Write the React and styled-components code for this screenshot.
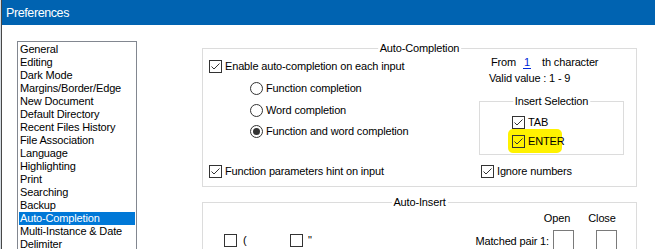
import React from "react";
import styled, { createGlobalStyle } from "styled-components";

const Global = createGlobalStyle`
  html, body { margin: 0; padding: 0; overflow: hidden; background: #ffffff; }
  * { box-sizing: border-box; }
`;

const Window = styled.div`
  width: 655px;
  height: 249px;
  overflow: hidden;
  background: #ffffff;
  border-left: 1px solid #d4dbe2;
  font-family: "Liberation Sans", Arial, sans-serif;
  font-size: 11px;
  letter-spacing: -0.15px;
  color: #000;
`;

const Frame = styled.div`
  height: 100%;
  border-left: 1px solid #474747;
  display: flex;
  flex-direction: column;
`;

const TitleBar = styled.div`
  height: 25px;
  flex: none;
  background: #0063b1;
  color: #fff;
  display: flex;
  align-items: center;
  padding-left: 4px;
  font-size: 12.5px;
  letter-spacing: -0.4px;
`;

const Body = styled.div`
  display: flex;
  align-items: flex-start;
  padding-left: 15px;
`;

const ListBox = styled.div`
  margin-top: 16px;
  width: 120px;
  height: 230px;
  border: 1px solid #828790;
  padding: 1px;
  flex: none;
`;

const ListItem = styled.div`
  height: 13px;
  line-height: 13px;
  padding-left: 1px;
  white-space: nowrap;
  background: ${(p) => (p.$selected ? "#0078d7" : "transparent")};
  color: ${(p) => (p.$selected ? "#fff" : "#000")};
`;

const Content = styled.div`
  margin-left: 65px;
  padding-top: 23px;
  display: flex;
  flex-direction: column;
`;

const Group = styled.div`
  position: relative;
  border: 1px solid #dcdcdc;
  width: ${(p) => p.$w}px;
  height: ${(p) => p.$h}px;
  margin-top: ${(p) => p.$mt || 0}px;
  flex: none;
`;

const Legend = styled.span`
  position: absolute;
  top: -7px;
  left: 50%;
  transform: translateX(-50%);
  background: #fff;
  padding: 0 2px;
  line-height: 13px;
  white-space: nowrap;
`;

const TopSection = styled.div`
  display: flex;
`;

const LeftCol = styled.div`
  width: 276px;
  flex: none;
  padding-top: 11px;
  padding-left: 6px;
  display: flex;
  flex-direction: column;
`;

const RadioList = styled.div`
  padding-left: 41px;
  display: flex;
  flex-direction: column;
`;

const RightCol = styled.div`
  padding-top: 7px;
  display: flex;
  flex-direction: column;
`;

const Row = styled.div`
  position: relative;
  z-index: 0;
  display: flex;
  align-items: center;
  height: 13px;
  line-height: 13px;
  white-space: nowrap;
  margin-top: ${(p) => p.$mt || 0}px;
  padding-left: ${(p) => p.$pl || 0}px;
  width: ${(p) => (p.$w ? `${p.$w}px` : "auto")};
  flex: none;
`;

const BoxMark = styled.span`
  width: 13px;
  height: 13px;
  border: 1px solid #333;
  flex: none;
  display: inline-flex;
  margin-right: 3px;
`;

const RadioMark = styled.span`
  width: 13px;
  height: 13px;
  border: 1px solid #333;
  border-radius: 50%;
  flex: none;
  display: inline-flex;
  align-items: center;
  justify-content: center;
  margin-right: 3px;
  background: #fff;
  &::after {
    content: "";
    width: 7px;
    height: 7px;
    border-radius: 50%;
    background: ${(p) => (p.$on ? "#333" : "transparent")};
  }
`;

const Highlight = styled.span`
  position: absolute;
  z-index: -1;
  left: ${(p) => p.$l}px;
  top: -6px;
  width: 54px;
  height: 24px;
  border-radius: 5px;
  background: #fff200;
`;

const ValueField = styled.span`
  margin-left: 7px;
  width: 8px;
  text-align: center;
  color: #0026d8;
  border-bottom: 1px solid #0026d8;
  line-height: 12px;
`;

const Spaced = styled.span`
  margin-left: ${(p) => p.$ml}px;
`;

const BottomRow = styled.div`
  display: flex;
  margin-top: 10px;
  padding-left: 6px;
`;

const InsertInner = styled.div`
  padding-top: 14px;
  padding-left: 32px;
  display: flex;
  flex-direction: column;
`;

const HeaderRow = styled.div`
  display: flex;
  padding-top: 9px;
  padding-left: 334px;
  gap: 5px;
`;

const HeaderCell = styled.span`
  width: 40px;
  text-align: center;
  line-height: 13px;
`;

const PairRow = styled.div`
  display: flex;
  align-items: center;
  height: 21px;
  margin-top: 5px;
  padding-left: 21px;
`;

const PairLabel = styled.span`
  margin-left: auto;
  white-space: nowrap;
`;

const EditBox = styled.span`
  width: 21px;
  height: 21px;
  border: 1px solid #7a7a7a;
  margin-left: ${(p) => p.$ml}px;
  flex: none;
`;

function Check({ checked }) {
  return (
    <BoxMark>
      {checked && (
        <svg width="11" height="11" viewBox="0 0 11 11">
          <path d="M1.5 5.5 L4 8 L9.5 2.5" fill="none" stroke="#333" strokeWidth="1" />
        </svg>
      )}
    </BoxMark>
  );
}

const items = [
  "General",
  "Editing",
  "Dark Mode",
  "Margins/Border/Edge",
  "New Document",
  "Default Directory",
  "Recent Files History",
  "File Association",
  "Language",
  "Highlighting",
  "Print",
  "Searching",
  "Backup",
  "Auto-Completion",
  "Multi-Instance & Date",
  "Delimiter",
];

export default function App() {
  return (
    <>
      <Global />
      <Window>
        <Frame>
          <TitleBar>Preferences</TitleBar>
          <Body>
            <ListBox>
              {items.map((t) => (
                <ListItem key={t} $selected={t === "Auto-Completion"}>
                  {t}
                </ListItem>
              ))}
            </ListBox>
            <Content>
              <Group $w={435} $h={139}>
                <Legend>Auto-Completion</Legend>
                <TopSection>
                  <LeftCol>
                    <Row>
                      <Check checked />
                      Enable auto-completion on each input
                    </Row>
                    <RadioList>
                      <Row $mt={9}>
                        <RadioMark />
                        Function completion
                      </Row>
                      <Row $mt={9}>
                        <RadioMark />
                        Word completion
                      </Row>
                      <Row $mt={8}>
                        <RadioMark $on />
                        Function and word completion
                      </Row>
                    </RadioList>
                  </LeftCol>
                  <RightCol>
                    <Row $pl={12}>
                      From
                      <ValueField>1</ValueField>
                      <Spaced $ml={11}>th character</Spaced>
                    </Row>
                    <Row $pl={10} $mt={3}>
                      Valid value : 1 - 9
                    </Row>
                    <Group $w={145} $h={54} $mt={16}>
                      <Legend>Insert Selection</Legend>
                      <InsertInner>
                        <Row>
                          <Check checked />
                          TAB
                        </Row>
                        <Row $mt={6}>
                          <Highlight $l={-4} />
                          <Check checked />
                          ENTER
                        </Row>
                      </InsertInner>
                    </Group>
                  </RightCol>
                </TopSection>
                <BottomRow>
                  <Row $w={272}>
                    <Check checked />
                    Function parameters hint on input
                  </Row>
                  <Row>
                    <Check checked />
                    Ignore numbers
                  </Row>
                </BottomRow>
              </Group>
              <Group $w={435} $h={80} $mt={15}>
                <Legend>Auto-Insert</Legend>
                <HeaderRow>
                  <HeaderCell>Open</HeaderCell>
                  <HeaderCell>Close</HeaderCell>
                </HeaderRow>
                <PairRow>
                  <Row $w={66}>
                    <Check />
                    <Spaced $ml={3}>(</Spaced>
                  </Row>
                  <Row>
                    <Check />
                    <Spaced $ml={2}>"</Spaced>
                  </Row>
                  <PairLabel>Matched pair 1:</PairLabel>
                  <EditBox $ml={4} />
                  <EditBox $ml={22} />
                  <Spaced $ml={19} />
                </PairRow>
              </Group>
            </Content>
          </Body>
        </Frame>
      </Window>
    </>
  );
}
